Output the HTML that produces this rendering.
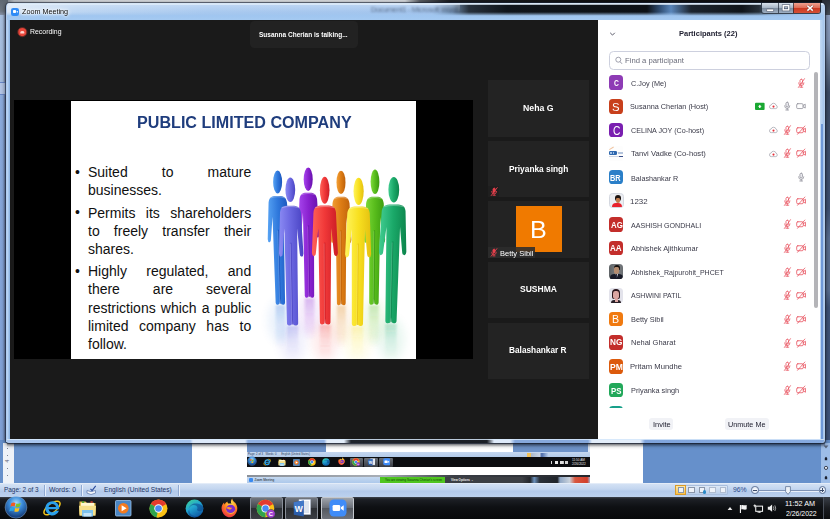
<!DOCTYPE html>
<html lang="en">
<head>
<meta charset="utf-8">
<title>Zoom Meeting</title>
<style>
*{box-sizing:border-box;margin:0;padding:0}
html,body{width:830px;height:519px;overflow:hidden;background:#658fcb;font-family:"Liberation Sans",sans-serif}
body{position:relative}
div,span,i,svg{position:absolute;display:block}
.t{white-space:pre;transform-origin:0 50%}
.ln{position:relative;display:block;white-space:nowrap;text-align:justify;text-align-last:justify;height:18.3px;transform-origin:0 50%}
.ln.last{text-align-last:left}
.av{border-radius:3.6px;overflow:hidden}
</style>
</head>
<body>
<div id="w" style="left:0;top:0;width:830px;height:519px;filter:blur(.4px)"><div style="left:0.00px;top:-8.00px;width:830.00px;height:14.00px;background:linear-gradient(90deg,#59626d 0,#7b838d 6px,#b9bec5 14px,#d4d7db 60px,#dcdfe3 200px,#d8dbdf 405px,#5a5e64 420px,#1b1d21 450px,#0e0f11 620px,#111316 100%)"></div><div style="left:-8.00px;top:-8.00px;width:16.00px;height:24.00px;background:linear-gradient(#5f6872,#5f6872 8px,#6f7884 80%,#8f9cb4)"></div><div style="left:-8.00px;top:15.00px;width:16.00px;height:469.00px;background:linear-gradient(#aac2e2 0,#a4bcde 66px,#8cacde 82px,#86a6da 200px,#7fa0d6 100%)"></div><div style="left:-8.00px;top:15.00px;width:16.00px;height:428.00px;background:linear-gradient(90deg,rgba(70,70,100,0) 0,rgba(70,70,100,0) 11px,rgba(70,70,100,.4) 13px,rgba(70,70,100,.55) 14.300px)"></div><div style="left:-1.00px;top:81.60px;width:6.60px;height:13.50px;border:1.200px solid #6a88c8;border-right-color:#9ab0d8;background:#b4c6e6"></div><div style="left:822.00px;top:-8.00px;width:16.00px;height:24.00px;background:linear-gradient(#2a2f38,#2a2f38 8px,#4a525e)"></div><div style="left:822.00px;top:15.00px;width:16.00px;height:430.00px;background:linear-gradient(#8c9fc2 0,#8496b6 6%,#5f6f88 12%,#3c4c66 18%,#3f5274 45%,#5a6f92 52%,#5a6f92 64%,#3f5478 68%,#40567e 100%)"></div><div style="left:-8.00px;top:440.00px;width:846.00px;height:44.00px;background:#6690cb"></div><div style="left:3.00px;top:443.00px;width:10.50px;height:41.00px;background:#eef2f8"></div><div style="left:7.00px;top:448.00px;width:1.00px;height:1.00px;background:#7a8494"></div><div style="left:7.00px;top:455.00px;width:1.00px;height:1.00px;background:#7a8494"></div><div style="left:7.00px;top:468.00px;width:1.00px;height:1.00px;background:#7a8494"></div><div style="left:7.00px;top:475.00px;width:1.00px;height:1.00px;background:#7a8494"></div><span style="left:5.5px;top:458px;font-size:5px;line-height:6px;color:#5a6474;transform:rotate(-90deg)">4</span><div style="left:191.60px;top:440.00px;width:451.20px;height:44.00px;background:#fff"></div><div style="left:821.00px;top:443.00px;width:17.00px;height:41.00px;background:#9dbde8"></div><svg style="left:822px;top:444px" width="8" height="40" viewBox="0 0 8 40"><path d="M1.6 1.5l2.4 3 2.4-3z" fill="#58657c"/><path d="M4 12.700l1.200 1.200v2.300h-2.400v-2.300zM4 31.800l-1.200 1.200v2.300h2.400v-2.300z" fill="#1a2030"/><circle cx="4" cy="23.900" r="1.600" fill="#e8eef8" stroke="#2a3040" stroke-width=".9"/></svg><div style="left:246.50px;top:443.00px;width:79.00px;height:9.00px;background:#6e93c9"></div><div style="left:512.80px;top:443.00px;width:77.20px;height:9.00px;background:#6e93c9"></div><div style="left:587.50px;top:443.00px;width:2.50px;height:14.00px;background:#dfe7f3"></div><div style="left:246.50px;top:451.80px;width:343.50px;height:5.50px;background:linear-gradient(#c5d7ef,#b3cae9)"></div><div style="left:246.50px;top:457.30px;width:343.50px;height:9.70px;background:#0c0d10"></div><span style="left:248px;top:452.3px;font-size:2.8px;line-height:4px;color:#2a3a5a;white-space:nowrap">Page: 2 of 3 &#160; Words: 0 &#160;&#160;&#160;&#160; English (United States)</span><div style="left:527.00px;top:452.60px;width:21.00px;height:4.00px;background:linear-gradient(90deg,#f2c25a 0,#f2c25a 18%,#aab8cc 20%,#c9d4e4 60%,#4a6aa8 70%,#b3cae9 100%)"></div><div style="left:349.90px;top:457.60px;width:13.60px;height:9.40px;background:linear-gradient(#6a6f78,#3a3d44);border-radius:1px"></div><div style="left:364.40px;top:457.60px;width:13.60px;height:9.40px;background:linear-gradient(#6a6f78,#3a3d44);border-radius:1px"></div><div style="left:379.00px;top:457.60px;width:13.60px;height:9.40px;background:linear-gradient(#6a6f78,#3a3d44);border-radius:1px"></div><svg style="left:246.88px;top:456.49px" width="10.03" height="10.03" viewBox="0 0 24 24"><circle cx="12" cy="12.300" r="10.900" fill="url(#orb)" stroke="#a8c8e8" stroke-width="0.700" stroke-opacity=".55"/><path d="M7.300 8.300q2-1.200 4.200-.3l-.9 3.500q-2.100-.9-4.200.3z" fill="#f25a22"/><path d="M12.400 8.400q2.100.9 4.300-.3l-.9 3.500q-2.200 1.100-4.300.3z" fill="#7cc32a"/><path d="M6.100 12.900q2.100-1.200 4.200-.3l-.9 3.500q-2.100-.9-4.200.3z" fill="#2aa4e8"/><path d="M11.200 13q2.100.9 4.300-.3l-.9 3.500q-2.200 1.100-4.300.3z" fill="#fbc21c"/></svg><svg style="left:262.56px;top:457.62px" width="8.36" height="8.36" viewBox="0 0 20 20"><ellipse cx="10" cy="10" rx="9.600" ry="4.400" transform="rotate(-38 10 10)" fill="none" stroke="#f2c41a" stroke-width="1.500"/><path d="M10.300 3.200a7.100 7.100 0 1 0 6.700 9.600h-3.600a3.900 3.900 0 0 1-6.900-1.500h10.800a7.100 7.100 0 0 0-7-8.100zm-3.800 5.700a3.900 3.900 0 0 1 7.500 0z" fill="#2aa0ec"/></svg><svg style="left:277.82px;top:457.62px" width="7.94" height="8.36" viewBox="0 0 19 20"><path d="M1.500 3.500h6l1.500 1.500h8.500v11.500h-16z" fill="#e2bf4e"/><rect x="3" y="4.800" width="13" height="4" fill="#fff7d0"/><rect x="4" y="3.300" width="2.200" height="1.500" fill="#3fa63a"/><rect x="12.500" y="3.300" width="2.200" height="1.500" fill="#d9422b"/><path d="M1 7.800h17l-.5 10h-16z" fill="#f6e08a"/><path d="M4 12h11v6.500h-11z" fill="#7fc3ee"/><path d="M5.500 15h8v3.500h-8z" fill="#c5e5f9"/></svg><svg style="left:293.07px;top:458.58px" width="7.11" height="7.11" viewBox="0 0 17 17"><rect x="0.500" y="0.500" width="15.500" height="15.500" rx="1" fill="#4a86c4" stroke="#9cc2ea" stroke-width=".8"/><circle cx="8.300" cy="8.300" r="5.300" fill="#f47a1e"/><path d="M6.600 5.300l5 3-5 3z" fill="#fff"/></svg><svg style="left:307.66px;top:457.83px" width="7.94" height="7.94" viewBox="0 0 19 19"><circle cx="9.500" cy="9.500" r="9" fill="#fbc116"/><path d="M9.500 9.500L1.700 5a9 9 0 0 1 15.600 0z" fill="#e33b2e"/><path d="M9.500 9.500L1.700 5a9 9 0 0 0 7.800 13.500z" fill="#2fa44f"/><path d="M9.500 9.500l3.900 2.250-3.900 6.750a9 9 0 0 1-2-.3z" fill="#fbc116"/><circle cx="9.500" cy="9.500" r="4.200" fill="#fff"/><circle cx="9.500" cy="9.500" r="3.300" fill="#4a8af4"/></svg><svg style="left:322.37px;top:457.83px" width="7.94" height="7.94" viewBox="0 0 19 19"><circle cx="9.500" cy="9.500" r="8.900" fill="url(#edg)"/><path d="M18.400 8.600c0 2.400-1.700 3.600-3.700 3.600-1.600 0-2.700-.7-2.700-1.600 0-.6.500-.8.500-1.700 0-1.700-1.700-3-3.800-3-2.600 0-4.400 1.800-4.900 4 .4-3 3-5.500 6.400-5.500 4.400 0 8 2 8.200 4.200z" fill="#0b3f86" opacity=".55"/><path d="M4.300 10.600c-.2 3.600 2.600 6.600 6.600 6.600 1.500 0 2.900-.4 4-1-1.500 1.500-3.400 2.200-5.400 2.200-3.600 0-6.300-2.500-6.300-5.600 0-.8.400-1.700 1.100-2.200z" fill="#0b3f86" opacity=".45"/></svg><svg style="left:337.59px;top:457.45px" width="7.94" height="8.36" viewBox="0 0 19 20"><path d="M9.500 19.300a9 9 0 0 1-8.700-11c.5-1.900 1.600-3.200 2.400-3.800-.1.800.1 1.500.4 1.900.6-1.700 2-2.500 3-3-.3.800 0 1.700.6 2.200 1-.3 2.300-.2 3.300.2-1.100-1.700-.6-3.700.7-5.200.2 2 1.600 3 3 4.200a9 9 0 0 1-4.700 14.500z" fill="url(#ffx)"/><circle cx="9.700" cy="11.300" r="4.500" fill="#7a2bd0"/><path d="M5.600 9.600c1-.9 2.200-.9 3-.3.700.6 1.700.5 2.400.1-.3 1.500-1.600 2.200-2.900 2-1.300-.1-2.300-.8-2.500-1.800z" fill="#ff9a2a"/><path d="M5.100 11.300a4.600 4.600 0 0 0 9.200.3 5.400 5.400 0 0 1-5.600 3.300c-1.900-.3-3.300-1.700-3.600-3.600z" fill="#ffb52a"/></svg><svg style="left:352.39px;top:457.87px" width="8.36" height="8.36" viewBox="0 0 20 20"><circle cx="9.500" cy="9.500" r="8.800" fill="#fbc116"/><path d="M9.500 9.500L1.900 5.100a8.800 8.800 0 0 1 15.200 0z" fill="#e33b2e"/><path d="M9.500 9.500L1.900 5.100a8.800 8.800 0 0 0 7.600 13.200z" fill="#2fa44f"/><circle cx="9.500" cy="9.500" r="4.100" fill="#fff"/><circle cx="9.500" cy="9.500" r="3.200" fill="#4a8af4"/><circle cx="14.900" cy="14.700" r="4.300" fill="#a03fd0" stroke="#33363c" stroke-width=".5"/><text x="14.900" y="16.800" font-family="Liberation Sans,sans-serif" font-size="5.800" font-weight="bold" fill="#fff" text-anchor="middle">C</text></svg><svg style="left:367.52px;top:457.62px" width="7.94" height="8.36" viewBox="0 0 19 20"><path d="M6 1.500h11.500v15h-11.500z" fill="#fff" stroke="#b8c4d8" stroke-width=".6"/><path d="M9 4h7M9 6h7M9 8h7M9 10h7M9 12h7M9 14h7" stroke="#9fb2d0" stroke-width=".7"/><path d="M.8 4.200l10-1.700v16l-10-1.700z" fill="#2a5caa"/><path d="M.8 4.200l10-1.700v8.200h-10z" fill="#4178c8"/><text x="5.800" y="14" font-family="Liberation Sans,sans-serif" font-size="8.500" font-weight="bold" fill="#fff" text-anchor="middle">W</text></svg><svg style="left:382.65px;top:458.04px" width="7.52" height="7.52" viewBox="0 0 18 18"><rect x=".5" y=".5" width="17" height="17" rx="4.200" fill="#3f8cf8"/><rect x="3.600" y="5.900" width="7.600" height="6.200" rx="1.400" fill="#fff"/><path d="M11.900 8.200l2.800-1.900v5.400l-2.800-1.900z" fill="#fff"/></svg><span style="left:572px;top:458px;font-size:3.1px;line-height:4px;color:#e8e8e8;white-space:nowrap">11:50 AM</span><span style="left:572px;top:462px;font-size:3.1px;line-height:4px;color:#e8e8e8;white-space:nowrap">2/26/2022</span><div style="left:549.00px;top:460.50px;width:19.00px;height:3.50px;background:linear-gradient(90deg,#0c0d10 0,#0c0d10 8%,#d8d8d8 10%,#d8d8d8 14%,#0c0d10 16%,#0c0d10 30%,#e8e8e8 32%,#e8e8e8 48%,#0c0d10 50%,#0c0d10 58%,#e0e0e0 60%,#e0e0e0 76%,#0c0d10 78%,#0c0d10 84%,#d0d0d0 86%,#d0d0d0 98%,#0c0d10 100%)"></div><div style="left:246.50px;top:475.30px;width:343.50px;height:1.30px;background:linear-gradient(90deg,#8a9098 0,#a8aeb6 40%,#3a3e46 60%,#24272c 100%)"></div><div style="left:246.50px;top:476.60px;width:133.90px;height:7.00px;background:linear-gradient(#c4d8f0,#a9c6ea)"></div><div style="left:248.50px;top:478.00px;width:4.00px;height:4.00px;background:#3a8af0;border-radius:1px"></div><span style="left:254.5px;top:477.8px;font-size:3.1px;line-height:4px;color:#1a1a1a;white-space:nowrap">Zoom Meeting</span><div style="left:380.40px;top:476.60px;width:64.40px;height:7.00px;background:#4fc51f"></div><span style="left:385px;top:478px;font-size:3px;line-height:4px;color:#0c3a08;white-space:nowrap">You are viewing Susanna Cherian&#39;s screen</span><div style="left:444.80px;top:476.60px;width:77.20px;height:7.00px;background:#3c3f44"></div><span style="left:451px;top:478px;font-size:3px;line-height:4px;color:#f0f0f0;font-weight:bold;white-space:nowrap">View Options ⌄</span><div style="left:522.00px;top:476.60px;width:68.00px;height:7.00px;background:linear-gradient(90deg,#3c3f44 0,#23262b 12%,#6a90bc 18%,#2a3038 26%,#20242a 52%,#8fa6c4 56%,#c9d2dc 70%,#d8573f 78%,#d23f2c 96%,#9fb6d6 100%)"></div><div style="left:-8.00px;top:483.40px;width:846.00px;height:13.20px;background:linear-gradient(#d3e1f4 0,#c2d5ef 40%,#b2c9ea 55%,#bcd1ee 100%);border-top:1px solid #e3ecf8"></div><span class="t" style="left:4.32px;top:485.15px;font-size:7.3px;line-height:9.5px;color:#1e3566;transform:scaleX(0.8785);">Page: 2 of 3</span><span class="t" style="left:49.04px;top:485.15px;font-size:7.3px;line-height:9.5px;color:#1e3566;transform:scaleX(0.9321);">Words: 0</span><span class="t" style="left:104.32px;top:485.15px;font-size:7.3px;line-height:9.5px;color:#1e3566;transform:scaleX(0.9080);">English (United States)</span><div style="left:44.40px;top:484.60px;width:1.00px;height:11.40px;background:#8fa9d2;box-shadow:1px 0 0 #e8f0fb"></div><div style="left:80.60px;top:484.60px;width:1.00px;height:11.40px;background:#8fa9d2;box-shadow:1px 0 0 #e8f0fb"></div><div style="left:177.60px;top:484.60px;width:1.00px;height:11.40px;background:#8fa9d2;box-shadow:1px 0 0 #e8f0fb"></div><svg style="left:86px;top:485px" width="11" height="10" viewBox="0 0 11 10"><path d="M1 5.500l4 1.200 4.500-1.200v2.600l-4.500 1.400-4-1.400z" fill="#f4f6fa" stroke="#5a74a8" stroke-width=".7"/><path d="M4.500 3.800l1.600 1.800 3.600-4.800" fill="none" stroke="#2a4a9a" stroke-width="1.100"/></svg><div style="left:675.00px;top:485.00px;width:53.00px;height:10.30px;background:linear-gradient(#dde8f6,#b9cde9);border:1px solid #a9bedd;border-radius:1px"></div><div style="left:675.30px;top:485.00px;width:11.00px;height:10.30px;background:linear-gradient(#fde9a8,#f7c04a);border:1px solid #d89a2a"></div><div style="left:677.60px;top:487.20px;width:6.40px;height:6.00px;background:#eef2f8;border:1px solid #8a96aa"></div><div style="left:688.20px;top:487.20px;width:6.40px;height:6.00px;background:#eef2f8;border:1px solid #8a96aa"></div><div style="left:698.60px;top:487.20px;width:6.40px;height:6.00px;background:#eef2f8;border:1px solid #8a96aa"></div><div style="left:709.20px;top:487.20px;width:6.40px;height:6.00px;background:#eef2f8;border:1px solid #b0bccf"></div><div style="left:719.60px;top:487.20px;width:6.40px;height:6.00px;background:#eef2f8;border:1px solid #b0bccf"></div><div style="left:702.60px;top:490.40px;width:3.40px;height:3.40px;background:#2a8ac8;border-radius:50%"></div><span class="t" style="left:732.57px;top:485.15px;font-size:7.3px;line-height:9.5px;color:#2a4a8a;transform:scaleX(0.9289);">96%</span><div style="left:758.50px;top:489.60px;width:60.00px;height:1.00px;background:#7f93b6;box-shadow:0 1px 0 #e9f0fa"></div><div style="left:751.20px;top:486.30px;width:7.40px;height:7.40px;border-radius:50%;background:radial-gradient(#fff,#d0dcee);border:1px solid #5f7396"></div><div style="left:752.90px;top:489.60px;width:4.00px;height:0.90px;background:#3a4a6a"></div><div style="left:818.60px;top:486.30px;width:7.40px;height:7.40px;border-radius:50%;background:radial-gradient(#fff,#d0dcee);border:1px solid #5f7396"></div><div style="left:820.30px;top:489.60px;width:4.00px;height:0.90px;background:#3a4a6a"></div><div style="left:821.85px;top:488.00px;width:0.90px;height:4.00px;background:#3a4a6a"></div><svg style="left:784.500px;top:485.500px" width="6" height="9" viewBox="0 0 6 9"><path d="M.6.600h4.800v5l-2.400 2.800-2.400-2.800z" fill="#eef2f8" stroke="#5f7396" stroke-width=".8"/></svg><div style="left:-8.00px;top:496.60px;width:846.00px;height:31.40px;background:linear-gradient(#3d434d 0,#1d2026 2px,#0e1013 10px,#08090b 22px,#08090b 100%)"></div><div style="left:249.50px;top:497.20px;width:33.30px;height:22.80px;background:linear-gradient(#70757e 0,#44484f 45%,#2b2e33 50%,#3b3e45 100%);border:1px solid #888e98;border-radius:2px"></div><div style="left:285.20px;top:497.20px;width:33.00px;height:22.80px;background:linear-gradient(#70757e 0,#44484f 45%,#2b2e33 50%,#3b3e45 100%);border:1px solid #888e98;border-radius:2px"></div><div style="left:320.60px;top:497.20px;width:33.70px;height:22.80px;background:linear-gradient(#9ea3ab 0,#6d727b 45%,#54585f 50%,#6f737b 100%);border:1px solid #c4c8ce;border-radius:2px"></div>
<svg style="left:4px;top:495.300px" width="24" height="24" viewBox="0 0 24 24"><defs><radialGradient id="orb" cx="0.5" cy="0.3" r="0.75"><stop offset="0" stop-color="#a8dcff"/><stop offset="0.4" stop-color="#3a8ad8"/><stop offset="1" stop-color="#0c2a62"/></radialGradient></defs><circle cx="12" cy="12.300" r="10.900" fill="url(#orb)" stroke="#a8c8e8" stroke-width="0.700" stroke-opacity=".55"/><path d="M7.300 8.300q2-1.200 4.200-.3l-.9 3.500q-2.100-.9-4.200.3z" fill="#f25a22"/><path d="M12.400 8.400q2.100.9 4.300-.3l-.9 3.500q-2.200 1.100-4.300.3z" fill="#7cc32a"/><path d="M6.100 12.900q2.100-1.200 4.200-.3l-.9 3.500q-2.100-.9-4.200.3z" fill="#2aa4e8"/><path d="M11.200 13q2.100.9 4.300-.3l-.9 3.500q-2.200 1.100-4.300.3z" fill="#fbc21c"/></svg>
<svg style="left:41.500px;top:498px" width="20" height="20" viewBox="0 0 20 20"><ellipse cx="10" cy="10" rx="9.600" ry="4.400" transform="rotate(-38 10 10)" fill="none" stroke="#f2c41a" stroke-width="1.500"/><path d="M10.300 3.200a7.100 7.100 0 1 0 6.700 9.600h-3.600a3.900 3.900 0 0 1-6.900-1.500h10.800a7.100 7.100 0 0 0-7-8.100zm-3.800 5.700a3.900 3.900 0 0 1 7.500 0z" fill="#2aa0ec"/></svg>
<svg style="left:78px;top:498px" width="19" height="20" viewBox="0 0 19 20"><path d="M1.500 3.500h6l1.500 1.500h8.500v11.500h-16z" fill="#e2bf4e"/><rect x="3" y="4.800" width="13" height="4" fill="#fff7d0"/><rect x="4" y="3.300" width="2.200" height="1.500" fill="#3fa63a"/><rect x="12.500" y="3.300" width="2.200" height="1.500" fill="#d9422b"/><path d="M1 7.800h17l-.5 10h-16z" fill="#f6e08a"/><path d="M4 12h11v6.500h-11z" fill="#7fc3ee"/><path d="M5.500 15h8v3.500h-8z" fill="#c5e5f9"/></svg>
<svg style="left:114.500px;top:500.300px" width="17" height="17" viewBox="0 0 17 17"><rect x="0.500" y="0.500" width="15.500" height="15.500" rx="1" fill="#4a86c4" stroke="#9cc2ea" stroke-width=".8"/><circle cx="8.300" cy="8.300" r="5.300" fill="#f47a1e"/><path d="M6.600 5.300l5 3-5 3z" fill="#fff"/></svg>
<svg style="left:149.400px;top:498.500px" width="19" height="19" viewBox="0 0 19 19"><circle cx="9.500" cy="9.500" r="9" fill="#fbc116"/><path d="M9.500 9.500L1.700 5a9 9 0 0 1 15.600 0z" fill="#e33b2e"/><path d="M9.500 9.500L1.700 5a9 9 0 0 0 7.800 13.500z" fill="#2fa44f"/><path d="M9.500 9.500l3.900 2.250-3.900 6.750a9 9 0 0 1-2-.3z" fill="#fbc116"/><circle cx="9.500" cy="9.500" r="4.200" fill="#fff"/><circle cx="9.500" cy="9.500" r="3.300" fill="#4a8af4"/></svg>
<svg style="left:184.600px;top:498.500px" width="19" height="19" viewBox="0 0 19 19"><defs><linearGradient id="edg" x1="0.2" y1="0" x2="0.8" y2="1"><stop offset="0" stop-color="#3ccf9c"/><stop offset=".4" stop-color="#22a6d2"/><stop offset="1" stop-color="#0c4f9e"/></linearGradient></defs><circle cx="9.500" cy="9.500" r="8.900" fill="url(#edg)"/><path d="M18.400 8.600c0 2.400-1.700 3.600-3.700 3.600-1.600 0-2.700-.7-2.700-1.600 0-.6.500-.8.500-1.700 0-1.700-1.700-3-3.800-3-2.600 0-4.400 1.800-4.900 4 .4-3 3-5.500 6.400-5.500 4.400 0 8 2 8.200 4.200z" fill="#0b3f86" opacity=".55"/><path d="M4.300 10.600c-.2 3.600 2.600 6.600 6.600 6.600 1.500 0 2.900-.4 4-1-1.500 1.500-3.400 2.200-5.400 2.200-3.600 0-6.300-2.500-6.300-5.600 0-.8.400-1.700 1.100-2.200z" fill="#0b3f86" opacity=".45"/></svg>
<svg style="left:221px;top:497.600px" width="19" height="20" viewBox="0 0 19 20"><defs><radialGradient id="ffx" cx=".6" cy=".25" r=".85"><stop offset="0" stop-color="#ffe14a"/><stop offset=".45" stop-color="#ff8a1e"/><stop offset="1" stop-color="#e8224a"/></radialGradient></defs><path d="M9.500 19.300a9 9 0 0 1-8.700-11c.5-1.900 1.600-3.200 2.400-3.800-.1.800.1 1.500.4 1.900.6-1.700 2-2.500 3-3-.3.800 0 1.700.6 2.200 1-.3 2.300-.2 3.300.2-1.100-1.700-.6-3.700.7-5.200.2 2 1.600 3 3 4.200a9 9 0 0 1-4.700 14.500z" fill="url(#ffx)"/><circle cx="9.700" cy="11.300" r="4.500" fill="#7a2bd0"/><path d="M5.600 9.600c1-.9 2.200-.9 3-.3.700.6 1.700.5 2.400.1-.3 1.500-1.600 2.200-2.900 2-1.300-.1-2.300-.8-2.500-1.800z" fill="#ff9a2a"/><path d="M5.100 11.300a4.600 4.600 0 0 0 9.200.3 5.400 5.400 0 0 1-5.600 3.300c-1.900-.3-3.300-1.700-3.600-3.600z" fill="#ffb52a"/></svg>
<svg style="left:256.400px;top:498.600px" width="20" height="20" viewBox="0 0 20 20"><circle cx="9.500" cy="9.500" r="8.800" fill="#fbc116"/><path d="M9.500 9.500L1.900 5.100a8.800 8.800 0 0 1 15.200 0z" fill="#e33b2e"/><path d="M9.500 9.500L1.900 5.100a8.800 8.800 0 0 0 7.600 13.200z" fill="#2fa44f"/><circle cx="9.500" cy="9.500" r="4.100" fill="#fff"/><circle cx="9.500" cy="9.500" r="3.200" fill="#4a8af4"/><circle cx="14.900" cy="14.700" r="4.300" fill="#a03fd0" stroke="#33363c" stroke-width=".5"/><text x="14.900" y="16.800" font-family="Liberation Sans,sans-serif" font-size="5.800" font-weight="bold" fill="#fff" text-anchor="middle">C</text></svg>
<svg style="left:292.600px;top:498px" width="19" height="20" viewBox="0 0 19 20"><path d="M6 1.500h11.500v15h-11.500z" fill="#fff" stroke="#b8c4d8" stroke-width=".6"/><path d="M9 4h7M9 6h7M9 8h7M9 10h7M9 12h7M9 14h7" stroke="#9fb2d0" stroke-width=".7"/><path d="M.8 4.200l10-1.700v16l-10-1.700z" fill="#2a5caa"/><path d="M.8 4.200l10-1.700v8.200h-10z" fill="#4178c8"/><text x="5.800" y="14" font-family="Liberation Sans,sans-serif" font-size="8.500" font-weight="bold" fill="#fff" text-anchor="middle">W</text></svg>
<svg style="left:328.800px;top:499px" width="18" height="18" viewBox="0 0 18 18"><rect x=".5" y=".5" width="17" height="17" rx="4.200" fill="#3f8cf8"/><rect x="3.600" y="5.900" width="7.600" height="6.200" rx="1.400" fill="#fff"/><path d="M11.900 8.200l2.800-1.900v5.400l-2.800-1.900z" fill="#fff"/></svg>
<svg style="left:727.200px;top:506px" width="6" height="5" viewBox="0 0 6 5"><path d="M.6 4l2.400-3 2.400 3z" fill="#e8e8e8"/></svg>
<svg style="left:739.400px;top:503.600px" width="9.600" height="9.600" viewBox="0 0 12 12"><path d="M1.800 1.200v10" stroke="#f4f4f4" stroke-width="1.400"/><path d="M2.800 1.600c2.200-1.100 3.800.9 6.800-.3v5.400c-3 1.200-4.600-.8-6.800.3z" fill="#f4f4f4"/></svg>
<svg style="left:753px;top:503.600px" width="10.500" height="9.800" viewBox="0 0 13 12"><rect x="3.400" y="2.600" width="8.400" height="6.400" fill="none" stroke="#f0f0f0" stroke-width="1.300"/><path d="M2.200 0.400v3.600M.6 2h3.200M5.500 11h4.400M7.700 9v2" stroke="#f0f0f0" stroke-width="1.100"/></svg>
<svg style="left:767px;top:503.200px" width="10.400" height="10.400" viewBox="0 0 13 13"><path d="M1 4.700h2.200l3.200-2.700v9l-3.200-2.700h-2.200z" fill="#f0f0f0"/><path d="M8 4.300q1.300 2.200 0 4.400M9.800 3q2.200 3.500 0 7" fill="none" stroke="#d8d8d8" stroke-width=".9"/></svg>
<span class="t" style="left:785.41px;top:499.15px;font-size:7.6px;line-height:9.9px;color:#fff;transform:scaleX(0.9543);">11:52 AM</span><span class="t" style="left:785.62px;top:509.15px;font-size:7.6px;line-height:9.9px;color:#fff;transform:scaleX(0.9087);">2/26/2022</span><div style="left:822.70px;top:497.00px;width:15.30px;height:31.00px;background:linear-gradient(#3a3f48,#1a1c20 11px,#0c0d0f 22px,#0c0d0f);border-left:1px solid #4a505a"></div><div style="left:6.30px;top:3.00px;width:818.30px;height:440.00px;border-radius:4px 4px 3px 3px;background:#b4cdec;box-shadow:0 0 0 1px rgba(30,40,60,.6),0 1px 4px 1px rgba(0,0,0,.5)"></div><div style="left:7.30px;top:4.00px;width:816.30px;height:16.50px;border-radius:3px 3px 0 0;background:linear-gradient(90deg,#dde8f5 0,#cfe0f4 25px,#bcd5f2 70px,#a9c9ef 200px,#a5c6ee 330px,#a3c4ec 425px,#6f8cad 445px,#27303b 462px,#10151b 500px,#0d1116 640px,#2d4a6e 652px,#5a86ba 664px,#1c242e 684px,#10141a 735px,#27303a 752px,#5f7790 762px,#9ab9dc 790px,#b4cfee 100%)"></div><div style="left:7.30px;top:4.00px;width:452.70px;height:8.00px;border-radius:3px 0 0 0;background:linear-gradient(rgba(255,255,255,.28),rgba(255,255,255,0))"></div><div style="left:7.30px;top:3.40px;width:816.30px;height:1.20px;border-radius:3px 3px 0 0;background:rgba(225,238,250,.75)"></div><div style="left:7.30px;top:11.50px;width:816.30px;height:9.00px;background:linear-gradient(rgba(160,197,238,0) 0,rgba(160,197,238,.55) 25%,rgba(160,198,240,1) 42%,rgba(166,202,241,1) 100%)"></div><div style="left:366px;top:4.600px;width:92px;height:9px;overflow:hidden"><span style="left:5px;top:0;font-size:7.300px;line-height:9px;color:#2c3a52;opacity:.62;filter:blur(.8px);white-space:nowrap;letter-spacing:-.25px">Document1 - Microsoft Word</span></div><div style="left:6.30px;top:20.00px;width:4.20px;height:422.00px;background:linear-gradient(90deg,#a9c8f0,#b9d4f4 35%,#86aedf)"></div><div style="left:820.00px;top:20.00px;width:4.40px;height:422.00px;background:linear-gradient(90deg,#c4dbf5,#a5c4ea)"></div><div style="left:820.60px;top:124.00px;width:2.20px;height:314.50px;background:#7099d8"></div><div style="left:7.30px;top:438.80px;width:816.30px;height:4.20px;border-radius:0 0 3px 3px;background:linear-gradient(90deg,#a9c6ee 0,#a4c2ec 183px,#dde9f9 186px,#dde9f9 238px,#8fb0e2 241px,#8fb0e2 317px,#e4eefa 320px,#e4eefa 337px,#1e232b 344px,#1a1e25 480px,#dfeaf9 487px,#dfeaf9 503px,#86a8dc 508px,#86a8dc 581px,#e4eefa 585px,#e4eefa 633px,#7fa4dc 638px,#86aae0 100%)"></div><div style="left:7.30px;top:438.60px;width:816.30px;height:1.20px;background:rgba(214,232,250,.85)"></div><div style="left:7.00px;top:443.00px;width:818.00px;height:4.00px;background:linear-gradient(rgba(10,15,30,.5),rgba(10,15,30,.18) 50%,rgba(10,15,30,0))"></div><div style="left:11.10px;top:7.70px;width:8.00px;height:8.20px;border-radius:2.2px;background:#2f8bf6"><i style="left:1.700px;top:2.700px;width:3.400px;height:2.800px;border-radius:.7px;background:#fff"></i><i style="left:5.400px;top:3.100px;width:1.400px;height:2px;background:#fff;clip-path:polygon(0 35%,100% 0,100% 100%,0 65%)"></i></div><span class="t" style="left:22.37px;top:7.20px;font-size:7.5px;line-height:9.8px;color:#0a0a0a;transform:scaleX(0.9616);text-shadow:0 0 2px #fff,0 0 4px #fff,0 0 5px #fff;">Zoom Meeting</span><div style="left:761.40px;top:3.20px;width:59.40px;height:11.20px;border-radius:0 0 3px 3px;border:1px solid rgba(30,40,55,.85);border-top:0;background:linear-gradient(#d9e2ec 0,#aab8c8 45%,#7b8a9c 50%,#9fb0c4 100%);overflow:hidden"><i style="left:31px;top:0;width:28.400px;height:11.200px;background:linear-gradient(#f0a08e 0,#de6a54 45%,#cc3a22 50%,#d8553a 100%)"></i><i style="left:15.600px;top:0;width:1px;height:11.200px;background:rgba(30,40,55,.7)"></i><i style="left:30.300px;top:0;width:1px;height:11.200px;background:rgba(30,40,55,.7)"></i><svg style="left:0;top:0" width="59.400" height="11.200" viewBox="761.400 3.200 59.400 11.200"><rect x="766" y="9.300" width="7" height="2.500" rx=".5" fill="#fff" stroke="#485268" stroke-width=".6"/><rect x="782.600" y="5.900" width="5.600" height="4.200" fill="none" stroke="#485268" stroke-width="2.600"/><rect x="782.600" y="5.900" width="5.600" height="4.200" fill="none" stroke="#fff" stroke-width="1.500"/><path d="M806.800 5.800l5.400 5M812.200 5.800l-5.400 5" stroke="#7a2a20" stroke-width="2.500"/><path d="M806.800 5.800l5.400 5M812.200 5.800l-5.400 5" stroke="#fff" stroke-width="1.500"/></svg></div><div style="left:10.40px;top:20.20px;width:587.80px;height:418.60px;background:#1a1a1a"></div><svg style="left:17px;top:27px" width="11" height="11" viewBox="0 0 11 11"><circle cx="5.300" cy="5.100" r="4.100" fill="#e8463a"/><circle cx="5.300" cy="5.100" r="4.600" fill="none" stroke="#e8463a" stroke-opacity=".35" stroke-width="1"/><path d="M3.300 6.600v-1.200a2 1.300 0 0 1 4 0v1.200z" fill="#ffd6cf"/></svg><span class="t" style="left:29.56px;top:27.30px;font-size:7.4px;line-height:9.6px;color:#fff;transform:scaleX(0.9367);">Recording</span><div style="left:249.70px;top:21.00px;width:108.50px;height:26.90px;border-radius:4.500px;background:#222"></div><span class="t" style="left:259.03px;top:30.00px;font-size:7.5px;line-height:9.8px;color:#fff;font-weight:bold;transform:scaleX(0.8682);">Susanna Cherian is talking...</span><div style="left:13.80px;top:99.90px;width:459.20px;height:258.90px;background:#000"></div><div style="left:71.40px;top:100.60px;width:344.30px;height:258.20px;background:#fff;overflow:hidden"><svg style="left:183.6px;top:34.4px" width="161" height="223.700" viewBox="255 135 161 223.700"><defs><filter id="bl" x="-80%" y="-80%" width="260%" height="260%"><feGaussianBlur stdDeviation="4"/></filter><filter id="b1" x="-40%" y="-10%" width="180%" height="120%"><feGaussianBlur stdDeviation="0.900"/></filter><linearGradient id="g0" x1="0" y1="0" x2="1" y2="0"><stop offset="0" stop-color="#58a4f4"/><stop offset="0.5" stop-color="#2f78dc"/><stop offset="1" stop-color="#1a54bc"/></linearGradient><linearGradient id="r0" x1="0" y1="0" x2="0" y2="1"><stop offset="0" stop-color="#2f78dc" stop-opacity=".26"/><stop offset=".45" stop-color="#2f78dc" stop-opacity=".1"/><stop offset="1" stop-color="#2f78dc" stop-opacity="0"/></linearGradient><linearGradient id="g1" x1="0" y1="0" x2="1" y2="0"><stop offset="0" stop-color="#a848ee"/><stop offset="0.5" stop-color="#8a22d0"/><stop offset="1" stop-color="#6610ac"/></linearGradient><linearGradient id="r1" x1="0" y1="0" x2="0" y2="1"><stop offset="0" stop-color="#8a22d0" stop-opacity=".26"/><stop offset=".45" stop-color="#8a22d0" stop-opacity=".1"/><stop offset="1" stop-color="#8a22d0" stop-opacity="0"/></linearGradient><linearGradient id="g2" x1="0" y1="0" x2="1" y2="0"><stop offset="0" stop-color="#f4a238"/><stop offset="0.5" stop-color="#dd7c14"/><stop offset="1" stop-color="#bc600a"/></linearGradient><linearGradient id="r2" x1="0" y1="0" x2="0" y2="1"><stop offset="0" stop-color="#dd7c14" stop-opacity=".26"/><stop offset=".45" stop-color="#dd7c14" stop-opacity=".1"/><stop offset="1" stop-color="#dd7c14" stop-opacity="0"/></linearGradient><linearGradient id="g3" x1="0" y1="0" x2="1" y2="0"><stop offset="0" stop-color="#80dc3c"/><stop offset="0.5" stop-color="#58bc1c"/><stop offset="1" stop-color="#38980e"/></linearGradient><linearGradient id="r3" x1="0" y1="0" x2="0" y2="1"><stop offset="0" stop-color="#58bc1c" stop-opacity=".26"/><stop offset=".45" stop-color="#58bc1c" stop-opacity=".1"/><stop offset="1" stop-color="#58bc1c" stop-opacity="0"/></linearGradient><linearGradient id="g4" x1="0" y1="0" x2="1" y2="0"><stop offset="0" stop-color="#8c8cf4"/><stop offset="0.5" stop-color="#6a66e0"/><stop offset="1" stop-color="#4a44c4"/></linearGradient><linearGradient id="r4" x1="0" y1="0" x2="0" y2="1"><stop offset="0" stop-color="#6a66e0" stop-opacity=".26"/><stop offset=".45" stop-color="#6a66e0" stop-opacity=".1"/><stop offset="1" stop-color="#6a66e0" stop-opacity="0"/></linearGradient><linearGradient id="g5" x1="0" y1="0" x2="1" y2="0"><stop offset="0" stop-color="#ff6258"/><stop offset="0.5" stop-color="#f03838"/><stop offset="1" stop-color="#cc1c26"/></linearGradient><linearGradient id="r5" x1="0" y1="0" x2="0" y2="1"><stop offset="0" stop-color="#f03838" stop-opacity=".26"/><stop offset=".45" stop-color="#f03838" stop-opacity=".1"/><stop offset="1" stop-color="#f03838" stop-opacity="0"/></linearGradient><linearGradient id="g6" x1="0" y1="0" x2="1" y2="0"><stop offset="0" stop-color="#fff45c"/><stop offset="0.5" stop-color="#f8e020"/><stop offset="1" stop-color="#e4c010"/></linearGradient><linearGradient id="r6" x1="0" y1="0" x2="0" y2="1"><stop offset="0" stop-color="#f8e020" stop-opacity=".26"/><stop offset=".45" stop-color="#f8e020" stop-opacity=".1"/><stop offset="1" stop-color="#f8e020" stop-opacity="0"/></linearGradient><linearGradient id="g7" x1="0" y1="0" x2="1" y2="0"><stop offset="0" stop-color="#40cc90"/><stop offset="0.5" stop-color="#1aa868"/><stop offset="1" stop-color="#0c844c"/></linearGradient><linearGradient id="r7" x1="0" y1="0" x2="0" y2="1"><stop offset="0" stop-color="#1aa868" stop-opacity=".26"/><stop offset=".45" stop-color="#1aa868" stop-opacity=".1"/><stop offset="1" stop-color="#1aa868" stop-opacity="0"/></linearGradient></defs><rect x="275.7" y="305.2" width="9.4" height="42.0" fill="url(#r0)" filter="url(#b1)"/><ellipse cx="280.4" cy="320.7" rx="12.7" ry="22" fill="#2f78dc" opacity="0.09" filter="url(#bl)"/><rect x="304.8" y="298.3" width="9.4" height="42.0" fill="url(#r1)" filter="url(#b1)"/><ellipse cx="309.5" cy="313.8" rx="12.7" ry="22" fill="#8a22d0" opacity="0.09" filter="url(#bl)"/><rect x="336.9" y="305.7" width="8.8" height="42.0" fill="url(#r2)" filter="url(#b1)"/><ellipse cx="341.3" cy="321.2" rx="12.4" ry="22" fill="#dd7c14" opacity="0.09" filter="url(#bl)"/><rect x="369.2" y="305.2" width="9.4" height="42.0" fill="url(#r3)" filter="url(#b1)"/><ellipse cx="373.9" cy="320.7" rx="12.7" ry="22" fill="#58bc1c" opacity="0.09" filter="url(#bl)"/><rect x="287.0" y="326.0" width="11.2" height="31.5" fill="url(#r4)" filter="url(#b1)"/><ellipse cx="292.6" cy="341.5" rx="13.6" ry="22" fill="#6a66e0" opacity="0.09" filter="url(#bl)"/><rect x="319.9" y="324.9" width="10.6" height="32.6" fill="url(#r5)" filter="url(#b1)"/><ellipse cx="325.2" cy="340.4" rx="13.3" ry="22" fill="#f03838" opacity="0.09" filter="url(#bl)"/><rect x="351.8" y="326.5" width="11.2" height="31.0" fill="url(#r6)" filter="url(#b1)"/><ellipse cx="357.4" cy="342.0" rx="13.6" ry="22" fill="#f8e020" opacity="0.09" filter="url(#bl)"/><rect x="385.3" y="323.7" width="11.2" height="33.8" fill="url(#r7)" filter="url(#b1)"/><ellipse cx="390.9" cy="339.2" rx="13.6" ry="22" fill="#1aa868" opacity="0.09" filter="url(#bl)"/><g transform="translate(277.6 196.0) skewX(1.48) translate(-277.6 -196.0)"><path d="M275.6,196.0C271.8,196.0 269.2,197.2 268.4,202.5L266.6,239.2Q267.0,243.0 268.4,242.2Q269.8,241.7 269.8,239.2L272.0,216.7L272.9,302.7Q273.2,305.1 274.9,304.7Q277.2,304.7 277.2,302.2L277.6,298.7L278.0,302.2Q278.0,304.7 280.3,304.7Q282.0,305.1 282.3,302.7L283.2,216.7L285.4,239.2Q285.4,241.7 286.8,242.2Q288.2,243.0 288.6,239.2L286.8,202.5C286.0,197.2 283.4,196.0 279.6,196.0Z" fill="url(#g0)"/><path d="M270.1,198.0Q277.6,195.4 285.1,198.0" fill="none" stroke="#fff" stroke-opacity=".28" stroke-width="1.2"/><path d="M277.6,229.7V303.7" stroke="#1a54bc" stroke-opacity=".9" stroke-width="1"/><path d="M276.9,230.7V303.7" stroke="#fff" stroke-opacity=".3" stroke-width=".6"/></g><ellipse cx="277.6" cy="182.0" rx="4.5" ry="11.4" fill="url(#g0)"/><g transform="translate(308.2 192.8) skewX(0.71) translate(-308.2 -192.8)"><path d="M306.2,192.8C302.8,192.8 300.2,194.0 299.4,199.3L297.6,234.4Q298.0,238.2 299.3,237.4Q300.7,236.9 300.7,234.4L302.7,212.8L303.5,295.8Q303.8,298.2 305.5,297.8Q307.8,297.8 307.8,295.3L308.2,291.8L308.6,295.3Q308.6,297.8 310.9,297.8Q312.6,298.2 312.9,295.8L313.7,212.8L315.7,234.4Q315.7,236.9 317.1,237.4Q318.4,238.2 318.8,234.4L317.0,199.3C316.2,194.0 313.6,192.8 310.2,192.8Z" fill="url(#g1)"/><path d="M301.1,194.8Q308.2,192.2 315.3,194.8" fill="none" stroke="#fff" stroke-opacity=".28" stroke-width="1.2"/><path d="M308.2,225.4V296.8" stroke="#6610ac" stroke-opacity=".9" stroke-width="1"/><path d="M307.5,226.4V296.8" stroke="#fff" stroke-opacity=".3" stroke-width=".6"/></g><ellipse cx="308.2" cy="179.2" rx="4.5" ry="11.7" fill="url(#g1)"/><g transform="translate(341.0 196.7) skewX(0.16) translate(-341.0 -196.7)"><path d="M339.0,196.7C335.9,196.7 333.3,197.9 332.5,203.2L330.7,239.8Q331.1,243.6 332.3,242.8Q333.7,242.3 333.7,239.8L335.6,217.3L336.6,303.2Q336.9,305.6 338.5,305.2Q340.6,305.2 340.6,302.7L341.0,299.2L341.4,302.7Q341.4,305.2 343.5,305.2Q345.1,305.6 345.4,303.2L346.4,217.3L348.3,239.8Q348.3,242.3 349.7,242.8Q350.9,243.6 351.3,239.8L349.5,203.2C348.7,197.9 346.1,196.7 343.0,196.7Z" fill="url(#g2)"/><path d="M334.2,198.7Q341.0,196.1 347.8,198.7" fill="none" stroke="#fff" stroke-opacity=".28" stroke-width="1.2"/><path d="M341.0,230.3V304.2" stroke="#bc600a" stroke-opacity=".9" stroke-width="1"/><path d="M340.3,231.3V304.2" stroke="#fff" stroke-opacity=".3" stroke-width=".6"/></g><ellipse cx="341.0" cy="182.4" rx="4.5" ry="11.7" fill="url(#g2)"/><g transform="translate(375.0 196.8) skewX(-0.58) translate(-375.0 -196.8)"><path d="M373.0,196.8C369.6,196.8 367.0,198.0 366.2,203.3L364.4,239.7Q364.8,243.5 366.1,242.7Q367.5,242.2 367.5,239.7L369.5,217.3L370.3,302.7Q370.6,305.1 372.3,304.7Q374.6,304.7 374.6,302.2L375.0,298.7L375.4,302.2Q375.4,304.7 377.7,304.7Q379.4,305.1 379.7,302.7L380.5,217.3L382.5,239.7Q382.5,242.2 383.9,242.7Q385.2,243.5 385.6,239.7L383.8,203.3C383.0,198.0 380.4,196.8 377.0,196.8Z" fill="url(#g3)"/><path d="M367.9,198.8Q375.0,196.2 382.1,198.8" fill="none" stroke="#fff" stroke-opacity=".28" stroke-width="1.2"/><path d="M375.0,230.2V303.7" stroke="#38980e" stroke-opacity=".9" stroke-width="1"/><path d="M374.3,231.2V303.7" stroke="#fff" stroke-opacity=".3" stroke-width=".6"/></g><ellipse cx="375.0" cy="181.8" rx="4.4" ry="12.2" fill="url(#g3)"/><g transform="translate(290.3 205.7) skewX(1.10) translate(-290.3 -205.7)"><path d="M288.3,205.7C283.3,205.7 280.7,206.9 279.9,212.2L278.1,253.6Q278.5,257.4 280.1,256.6Q281.8,256.1 281.8,253.6L283.9,228.5L284.7,323.5Q285.0,325.9 287.2,325.5Q289.9,325.5 289.9,323.0L290.3,319.5L290.7,323.0Q290.7,325.5 293.4,325.5Q295.6,325.9 295.9,323.5L296.7,228.5L298.8,253.6Q298.8,256.1 300.5,256.6Q302.1,257.4 302.5,253.6L300.7,212.2C299.9,206.9 297.3,205.7 292.3,205.7Z" fill="url(#g4)"/><path d="M281.6,207.7Q290.3,205.1 299.0,207.7" fill="none" stroke="#fff" stroke-opacity=".28" stroke-width="1.2"/><path d="M290.3,242.8V324.5" stroke="#4a44c4" stroke-opacity=".9" stroke-width="1"/><path d="M289.6,243.8V324.5" stroke="#fff" stroke-opacity=".3" stroke-width=".6"/></g><ellipse cx="290.3" cy="189.8" rx="4.9" ry="12.2" fill="url(#g4)"/><g transform="translate(324.7 205.6) skewX(0.24) translate(-324.7 -205.6)"><path d="M322.7,205.6C316.9,205.6 314.3,206.8 313.5,212.1L311.7,253.1Q312.1,256.9 313.9,256.1Q315.7,255.6 315.7,253.1L318.2,228.2L319.4,322.4Q319.7,324.8 321.8,324.4Q324.3,324.4 324.3,321.9L324.7,318.4L325.1,321.9Q325.1,324.4 327.6,324.4Q329.7,324.8 330.0,322.4L331.2,228.2L333.7,253.1Q333.7,255.6 335.5,256.1Q337.3,256.9 337.7,253.1L335.9,212.1C335.1,206.8 332.5,205.6 326.7,205.6Z" fill="url(#g5)"/><path d="M315.2,207.6Q324.7,205.0 334.2,207.6" fill="none" stroke="#fff" stroke-opacity=".28" stroke-width="1.2"/><path d="M324.7,242.4V323.4" stroke="#cc1c26" stroke-opacity=".9" stroke-width="1"/><path d="M324.0,243.4V323.4" stroke="#fff" stroke-opacity=".3" stroke-width=".6"/></g><ellipse cx="324.7" cy="190.2" rx="4.8" ry="13.5" fill="url(#g5)"/><g transform="translate(358.6 206.6) skewX(-0.58) translate(-358.6 -206.6)"><path d="M356.6,206.6C350.8,206.6 348.2,207.8 347.4,213.1L345.6,254.3Q346.0,258.1 347.8,257.3Q349.6,256.8 349.6,254.3L352.0,229.3L353.0,324.0Q353.3,326.4 355.5,326.0Q358.2,326.0 358.2,323.5L358.6,320.0L359.0,323.5Q359.0,326.0 361.7,326.0Q363.9,326.4 364.2,324.0L365.2,229.3L367.6,254.3Q367.6,256.8 369.4,257.3Q371.2,258.1 371.6,254.3L369.8,213.1C369.0,207.8 366.4,206.6 360.6,206.6Z" fill="url(#g6)"/><path d="M349.1,208.6Q358.6,206.0 368.1,208.6" fill="none" stroke="#fff" stroke-opacity=".28" stroke-width="1.2"/><path d="M358.6,243.6V325.0" stroke="#e4c010" stroke-opacity=".9" stroke-width="1"/><path d="M357.9,244.6V325.0" stroke="#fff" stroke-opacity=".3" stroke-width=".6"/></g><ellipse cx="358.6" cy="191.3" rx="5.1" ry="13.6" fill="url(#g6)"/><g transform="translate(393.8 204.6) skewX(-1.40) translate(-393.8 -204.6)"><path d="M391.8,204.6C385.3,204.6 382.7,205.8 381.9,211.1L380.1,252.0Q380.5,255.8 382.4,255.0Q384.3,254.5 384.3,252.0L387.0,227.1L388.2,321.2Q388.5,323.6 390.7,323.2Q393.4,323.2 393.4,320.7L393.8,317.2L394.2,320.7Q394.2,323.2 396.9,323.2Q399.1,323.6 399.4,321.2L400.6,227.1L403.3,252.0Q403.3,254.5 405.2,255.0Q407.1,255.8 407.5,252.0L405.7,211.1C404.9,205.8 402.3,204.6 395.8,204.6Z" fill="url(#g7)"/><path d="M383.6,206.6Q393.8,204.0 404.0,206.6" fill="none" stroke="#fff" stroke-opacity=".28" stroke-width="1.2"/><path d="M393.8,241.4V322.2" stroke="#0c844c" stroke-opacity=".9" stroke-width="1"/><path d="M393.1,242.4V322.2" stroke="#fff" stroke-opacity=".3" stroke-width=".6"/></g><ellipse cx="393.8" cy="189.8" rx="5.4" ry="12.8" fill="url(#g7)"/></svg></div><span class="t" style="left:136.68px;top:111.30px;font-size:17.4px;line-height:22.6px;color:#1f3d7d;font-weight:bold;transform:scaleX(0.9270);">PUBLIC LIMITED COMPANY</span><div style="left:88px;top:163.1px;width:163.2px;font-size:14px;line-height:18.3px;color:#101010"><span class="ln">Suited to mature</span><span class="ln last">businesses.</span></div><span style="left:74.900px;top:162.5px;font-size:14px;line-height:18.3px;color:#101010">•</span><div style="left:88px;top:203.8px;width:163.2px;font-size:14px;line-height:18.3px;color:#101010"><span class="ln">Permits its shareholders</span><span class="ln">to freely transfer their</span><span class="ln last">shares.</span></div><span style="left:74.900px;top:203.20000000000002px;font-size:14px;line-height:18.3px;color:#101010">•</span><div style="left:88px;top:262.1px;width:163.2px;font-size:14px;line-height:18.3px;color:#101010"><span class="ln">Highly regulated, and</span><span class="ln">there are several</span><span class="ln">restrictions which a public</span><span class="ln">limited company has to</span><span class="ln last">follow.</span></div><span style="left:74.900px;top:261.5px;font-size:14px;line-height:18.3px;color:#101010">•</span><div style="left:487.80px;top:80.20px;width:101.10px;height:56.40px;background:#232323"></div><div style="left:487.80px;top:140.80px;width:101.10px;height:56.40px;background:#232323"></div><div style="left:487.80px;top:201.40px;width:101.10px;height:56.40px;background:#232323"></div><div style="left:487.80px;top:262.10px;width:101.10px;height:56.40px;background:#232323"></div><div style="left:487.80px;top:322.50px;width:101.10px;height:56.40px;background:#232323"></div><span class="t" style="left:523.34px;top:103.30px;font-size:8.8px;line-height:11.4px;color:#fff;font-weight:bold;transform:scaleX(0.9913);">Neha G</span><span class="t" style="left:508.63px;top:163.50px;font-size:8.8px;line-height:11.4px;color:#fff;font-weight:bold;transform:scaleX(0.9472);">Priyanka singh</span><span class="t" style="left:520.09px;top:283.90px;font-size:8.8px;line-height:11.4px;color:#fff;font-weight:bold;transform:scaleX(0.9681);">SUSHMA</span><span class="t" style="left:509.25px;top:345.10px;font-size:8.8px;line-height:11.4px;color:#fff;font-weight:bold;transform:scaleX(0.9413);">Balashankar R</span><div style="left:515.70px;top:206.00px;width:46.00px;height:46.20px;background:#f07a00"></div><span class="t" style="left:529.56px;top:214.30px;font-size:24.6px;line-height:32.0px;color:#fff;transform:scaleX(1.0208);">B</span><div style="left:488.20px;top:247.40px;width:46.60px;height:10.40px;background:rgba(44,44,44,.88)"></div><span class="t" style="left:500.47px;top:248.55px;font-size:7.3px;line-height:9.5px;color:#fff;transform:scaleX(1.0292);">Betty Sibil</span><svg style="left:490.04px;top:247.8px" width="7.92" height="8.80" viewBox="0 0 9 10"><g fill="none" stroke="#e8404c" stroke-linecap="round"><rect x="3.200" y="1.200" width="2.600" height="4.600" rx="1.300" fill="#e8404c" stroke-width=".6"/><path d="M1.800 4.800a2.700 2.700 0 0 0 5.400 0M4.500 7.500v1.300M3.200 9h2.600" stroke-width=".9"/><path d="M7.900 0.700L1.300 9.300" stroke-width="1"/></g></svg><div style="left:488.00px;top:186.40px;width:11.40px;height:10.80px;background:#1f1f1f"></div><svg style="left:489.86px;top:186.7px" width="8.28" height="9.20" viewBox="0 0 9 10"><g fill="none" stroke="#e8404c" stroke-linecap="round"><rect x="3.200" y="1.200" width="2.600" height="4.600" rx="1.300" fill="#e8404c" stroke-width=".6"/><path d="M1.800 4.800a2.700 2.700 0 0 0 5.400 0M4.500 7.500v1.300M3.200 9h2.600" stroke-width=".9"/><path d="M7.900 0.700L1.300 9.300" stroke-width="1"/></g></svg><div style="left:598.20px;top:20.20px;width:221.80px;height:418.70px;background:#fff"></div><svg style="left:608.500px;top:31px" width="7" height="6" viewBox="0 0 7 6"><path d="M1.200 1.800l2.300 2.300 2.300-2.300" fill="none" stroke="#4a4a5a" stroke-width=".9"/></svg><span class="t" style="left:679.24px;top:28.50px;font-size:7.7px;line-height:10.0px;color:#232333;font-weight:bold;transform:scaleX(0.9775);">Participants (22)</span><div style="left:609.00px;top:51.20px;width:201.40px;height:18.40px;border:1px solid #cdd0de;border-radius:4.500px;background:#fff"></div><svg style="left:615.300px;top:56.300px" width="8" height="9" viewBox="0 0 8 9"><circle cx="3.300" cy="3.700" r="2.500" fill="none" stroke="#8a8c9a" stroke-width=".8"/><path d="M5.100 5.700l1.900 2.100" stroke="#8a8c9a" stroke-width=".9"/></svg><span class="t" style="left:625.20px;top:56.00px;font-size:7.5px;line-height:9.8px;color:#6a6c7a;transform:scaleX(1.0245);">Find a participant</span><div style="left:598.2px;top:70px;width:216px;height:338.2px;overflow:hidden"><div style="left:-598.2px;top:-70px;width:830px;height:519px"><div class="av" style="left:608.80px;top:75.35px;width:14.60px;height:14.60px;background:#8e3bb5"></div><span class="t" style="left:614.09px;top:78.15px;font-size:8.4px;line-height:10.9px;color:#fff;font-weight:bold;transform:scaleX(0.8041);">C</span><span class="t" style="left:630.83px;top:78.60px;font-size:7.5px;line-height:9.8px;color:#3a3a48;transform:scaleX(0.9686);">C.Joy (Me)</span><svg style="left:797.4px;top:77.59px" width="8.60" height="10.32" viewBox="0 0 10 12"><g fill="none" stroke="#e84f5c" stroke-width="0.9" stroke-linecap="round"><rect x="3.500" y="1.400" width="3" height="5.600" rx="1.500"/><path d="M1.900 5.700a3.100 3.100 0 0 0 6.200 0M5 8.900v1.700M3.300 10.700h3.400M8.700 0.800L1.600 11"/></g></svg><div class="av" style="left:608.80px;top:98.98px;width:14.60px;height:14.60px;background:#c8401c"></div><span class="t" style="left:612.19px;top:99.55px;font-size:11.8px;line-height:15.3px;color:#fff;transform:scaleX(0.9627);">S</span><span class="t" style="left:630.44px;top:102.12px;font-size:7.5px;line-height:9.8px;color:#3a3a48;transform:scaleX(0.9729);">Susanna Cherian (Host)</span><svg style="left:754.9px;top:99.98px" width="10.00" height="12.00" viewBox="0 0 10 12"><rect x="0" y="2.800" width="9.600" height="7.100" rx="1" fill="#1aa832"/><path d="M4.800 4.700l1.800 2h-1.100v1.400h-1.400v-1.400h-1.100z" fill="#fff"/></svg><svg style="left:769.19px;top:101.46px" width="9.02" height="9.84" viewBox="0 0 11 12"><path d="M2.900 9.300a2.200 2.200 0 0 1-.3-4.400 3.100 3.100 0 0 1 6 .3 2.100 2.100 0 0 1-.3 4.100z" fill="#fff" stroke="#9a9aa4" stroke-width="0.8"/><circle cx="5.500" cy="6.800" r="1.300" fill="#e8303a"/></svg><svg style="left:783.3px;top:101.34px" width="8.40" height="10.08" viewBox="0 0 10 12"><g fill="none" stroke="#8c8c96" stroke-width="0.9" stroke-linecap="round"><rect x="3.500" y="1.400" width="3" height="5.600" rx="1.500" fill="#ececf0"/><path d="M1.900 5.700a3.100 3.100 0 0 0 6.200 0M5 8.900v1.700M3.300 10.700h3.400"/></g></svg><svg style="left:796.36px;top:101.34px" width="10.08" height="10.08" viewBox="0 0 12 12"><g fill="none" stroke="#8c8c96" stroke-width="0.9" stroke-linecap="round" stroke-linejoin="round"><rect x="0.800" y="3.200" width="7.600" height="5.800" rx="1.300"/><path d="M8.600 5.300l2.400-1.500v4.600l-2.400-1.500"/></g></svg><div class="av" style="left:608.80px;top:122.61px;width:14.60px;height:14.60px;background:#7a1fb0"></div><span class="t" style="left:613.08px;top:123.30px;font-size:12.3px;line-height:16.0px;color:#fff;transform:scaleX(0.8352);">C</span><span class="t" style="left:630.82px;top:125.64px;font-size:7.5px;line-height:9.8px;color:#3a3a48;transform:scaleX(0.9541);">CELINA JOY (Co-host)</span><svg style="left:769.19px;top:125.09px" width="9.02" height="9.84" viewBox="0 0 11 12"><path d="M2.900 9.300a2.200 2.200 0 0 1-.3-4.400 3.100 3.100 0 0 1 6 .3 2.100 2.100 0 0 1-.3 4.100z" fill="#fff" stroke="#9a9aa4" stroke-width="0.8"/><circle cx="5.500" cy="6.800" r="1.300" fill="#e8303a"/></svg><svg style="left:783.2px;top:124.85px" width="8.60" height="10.32" viewBox="0 0 10 12"><g fill="none" stroke="#e84f5c" stroke-width="0.9" stroke-linecap="round"><rect x="3.500" y="1.400" width="3" height="5.600" rx="1.500"/><path d="M1.900 5.700a3.100 3.100 0 0 0 6.200 0M5 8.900v1.700M3.300 10.700h3.400M8.700 0.800L1.600 11"/></g></svg><svg style="left:796.44px;top:124.85px" width="10.32" height="10.32" viewBox="0 0 12 12"><g fill="none" stroke="#e84f5c" stroke-width="0.9" stroke-linecap="round" stroke-linejoin="round"><rect x="0.800" y="3.200" width="7.600" height="5.800" rx="1.300"/><path d="M8.600 5.300l2.400-1.500v4.600l-2.400-1.500M10.300 1.200L1.800 10.800"/></g></svg><div class="av" style="left:608.80px;top:146.24px;width:14.60px;height:14.60px;background:#fdfdfd;border-radius:2px"><i style="left:.2px;top:4.400px;width:7.700px;height:4.100px;background:#2f68ae;border-radius:1.200px"></i><i style="left:1.600px;top:5.600px;width:1.200px;height:1.800px;background:#9fc0e6"></i><i style="left:4.400px;top:5.600px;width:1.200px;height:1.800px;background:#9fc0e6"></i><i style="left:9.300px;top:5.800px;width:4.700px;height:1.600px;background:#b4c4dc"></i><i style="left:10.700px;top:9.700px;width:3.900px;height:1px;background:#3a4f8a"></i><i style="left:.3px;top:9.800px;width:10px;height:.6px;background:#cfd6e4"></i><i style="left:.5px;top:1.400px;width:4.500px;height:.9px;background:#f0c4a0;transform:rotate(-32deg)"></i></div><span class="t" style="left:630.57px;top:149.16px;font-size:7.5px;line-height:9.8px;color:#3a3a48;transform:scaleX(1.0162);">Tanvi Vadke (Co-host)</span><svg style="left:769.19px;top:148.72px" width="9.02" height="9.84" viewBox="0 0 11 12"><path d="M2.900 9.300a2.200 2.200 0 0 1-.3-4.400 3.100 3.100 0 0 1 6 .3 2.100 2.100 0 0 1-.3 4.100z" fill="#fff" stroke="#9a9aa4" stroke-width="0.8"/><circle cx="5.500" cy="6.800" r="1.300" fill="#e8303a"/></svg><svg style="left:783.2px;top:148.48px" width="8.60" height="10.32" viewBox="0 0 10 12"><g fill="none" stroke="#e84f5c" stroke-width="0.9" stroke-linecap="round"><rect x="3.500" y="1.400" width="3" height="5.600" rx="1.500"/><path d="M1.900 5.700a3.100 3.100 0 0 0 6.200 0M5 8.900v1.700M3.300 10.700h3.400M8.700 0.800L1.600 11"/></g></svg><svg style="left:796.44px;top:148.48px" width="10.32" height="10.32" viewBox="0 0 12 12"><g fill="none" stroke="#e84f5c" stroke-width="0.9" stroke-linecap="round" stroke-linejoin="round"><rect x="0.800" y="3.200" width="7.600" height="5.800" rx="1.300"/><path d="M8.600 5.300l2.400-1.500v4.600l-2.400-1.500M10.300 1.200L1.800 10.800"/></g></svg><div class="av" style="left:608.80px;top:169.87px;width:14.60px;height:14.60px;background:#2a7fc8"></div><span class="t" style="left:610.37px;top:171.83px;font-size:9.3px;line-height:12.1px;color:#fff;font-weight:bold;transform:scaleX(0.7897);">BR</span><span class="t" style="left:630.54px;top:173.68px;font-size:7.5px;line-height:9.8px;color:#3a3a48;transform:scaleX(0.9616);">Balashankar R</span><svg style="left:797.3px;top:172.23px" width="8.40" height="10.08" viewBox="0 0 10 12"><g fill="none" stroke="#8c8c96" stroke-width="0.9" stroke-linecap="round"><rect x="3.500" y="1.400" width="3" height="5.600" rx="1.500" fill="#ececf0"/><path d="M1.900 5.700a3.100 3.100 0 0 0 6.200 0M5 8.900v1.700M3.300 10.700h3.400"/></g></svg><div class="av" style="left:608.50px;top:193.00px;width:15.30px;height:15.40px;background:#eceef2;border:.5px solid #d4d8e0"><i style="left:5.200px;top:1.300px;width:6.200px;height:5.400px;border-radius:3px 3px 2px 2px;background:#1c1410"></i><i style="left:6px;top:3.600px;width:4.400px;height:5px;border-radius:1.500px 1.500px 2.200px 2.200px;background:#bf7a4c"></i><i style="left:2.400px;top:9px;width:10.600px;height:4.600px;border-radius:4px 4px 1px 1px;background:#e8222c"></i></div><span class="t" style="left:630.26px;top:197.20px;font-size:7.5px;line-height:9.8px;color:#3a3a48;transform:scaleX(1.0545);">1232</span><svg style="left:783.2px;top:195.74px" width="8.60" height="10.32" viewBox="0 0 10 12"><g fill="none" stroke="#e84f5c" stroke-width="0.9" stroke-linecap="round"><rect x="3.500" y="1.400" width="3" height="5.600" rx="1.500"/><path d="M1.900 5.700a3.100 3.100 0 0 0 6.200 0M5 8.900v1.700M3.300 10.700h3.400M8.700 0.800L1.600 11"/></g></svg><svg style="left:796.44px;top:195.74px" width="10.32" height="10.32" viewBox="0 0 12 12"><g fill="none" stroke="#e84f5c" stroke-width="0.9" stroke-linecap="round" stroke-linejoin="round"><rect x="0.800" y="3.200" width="7.600" height="5.800" rx="1.300"/><path d="M8.600 5.300l2.400-1.500v4.600l-2.400-1.500M10.300 1.200L1.800 10.800"/></g></svg><div class="av" style="left:608.80px;top:217.13px;width:14.60px;height:14.60px;background:#c32e2b"></div><span class="t" style="left:610.62px;top:218.87px;font-size:9.3px;line-height:12.1px;color:#fff;font-weight:bold;transform:scaleX(0.8460);">AG</span><span class="t" style="left:631.06px;top:220.72px;font-size:7.5px;line-height:9.8px;color:#3a3a48;transform:scaleX(0.9451);">AASHISH GONDHALI</span><svg style="left:783.2px;top:219.37px" width="8.60" height="10.32" viewBox="0 0 10 12"><g fill="none" stroke="#e84f5c" stroke-width="0.9" stroke-linecap="round"><rect x="3.500" y="1.400" width="3" height="5.600" rx="1.500"/><path d="M1.900 5.700a3.100 3.100 0 0 0 6.200 0M5 8.900v1.700M3.300 10.700h3.400M8.700 0.800L1.600 11"/></g></svg><svg style="left:796.44px;top:219.37px" width="10.32" height="10.32" viewBox="0 0 12 12"><g fill="none" stroke="#e84f5c" stroke-width="0.9" stroke-linecap="round" stroke-linejoin="round"><rect x="0.800" y="3.200" width="7.600" height="5.800" rx="1.300"/><path d="M8.600 5.300l2.400-1.500v4.600l-2.400-1.500M10.300 1.200L1.800 10.800"/></g></svg><div class="av" style="left:608.80px;top:240.76px;width:14.60px;height:14.60px;background:#c32e2b"></div><span class="t" style="left:610.09px;top:242.39px;font-size:9.3px;line-height:12.1px;color:#fff;font-weight:bold;transform:scaleX(0.8685);">AA</span><span class="t" style="left:631.11px;top:244.24px;font-size:7.5px;line-height:9.8px;color:#3a3a48;transform:scaleX(0.9878);">Abhishek Ajithkumar</span><svg style="left:783.2px;top:243.0px" width="8.60" height="10.32" viewBox="0 0 10 12"><g fill="none" stroke="#e84f5c" stroke-width="0.9" stroke-linecap="round"><rect x="3.500" y="1.400" width="3" height="5.600" rx="1.500"/><path d="M1.900 5.700a3.100 3.100 0 0 0 6.200 0M5 8.900v1.700M3.300 10.700h3.400M8.700 0.800L1.600 11"/></g></svg><svg style="left:796.44px;top:243.0px" width="10.32" height="10.32" viewBox="0 0 12 12"><g fill="none" stroke="#e84f5c" stroke-width="0.9" stroke-linecap="round" stroke-linejoin="round"><rect x="0.800" y="3.200" width="7.600" height="5.800" rx="1.300"/><path d="M8.600 5.300l2.400-1.500v4.600l-2.400-1.500M10.300 1.200L1.800 10.800"/></g></svg><div class="av" style="left:608.80px;top:264.39px;width:14.60px;height:14.60px;background:linear-gradient(90deg,#5f6366,#7c8083 60%,#6a6e72)"><i style="left:4.800px;top:.7px;width:6.400px;height:5px;border-radius:3px 3px 1px 1px;background:#15110f"></i><i style="left:5.500px;top:2.400px;width:5px;height:6.800px;border-radius:1.500px 1.500px 2.500px 2.500px;background:#b48c70"></i><i style="left:.8px;top:9.600px;width:13px;height:6px;border-radius:4px 4px 0 0;background:#181a28"></i><i style="left:6.700px;top:9.200px;width:2.600px;height:4.500px;background:#e4e6ee;clip-path:polygon(0 0,100% 0,50% 100%)"></i><i style="left:7.600px;top:10px;width:.9px;height:4px;background:#2a2c40"></i></div><span class="t" style="left:631.04px;top:267.76px;font-size:7.5px;line-height:9.8px;color:#3a3a48;transform:scaleX(0.9389);">Abhishek_Rajpurohit_PHCET</span><svg style="left:783.2px;top:266.63px" width="8.60" height="10.32" viewBox="0 0 10 12"><g fill="none" stroke="#e84f5c" stroke-width="0.9" stroke-linecap="round"><rect x="3.500" y="1.400" width="3" height="5.600" rx="1.500"/><path d="M1.900 5.700a3.100 3.100 0 0 0 6.200 0M5 8.900v1.700M3.300 10.700h3.400M8.700 0.800L1.600 11"/></g></svg><svg style="left:796.44px;top:266.63px" width="10.32" height="10.32" viewBox="0 0 12 12"><g fill="none" stroke="#e84f5c" stroke-width="0.9" stroke-linecap="round" stroke-linejoin="round"><rect x="0.800" y="3.200" width="7.600" height="5.800" rx="1.300"/><path d="M8.600 5.300l2.400-1.500v4.600l-2.400-1.500M10.300 1.200L1.800 10.800"/></g></svg><div class="av" style="left:608.80px;top:288.02px;width:14.60px;height:14.60px;background:#e3e3eb"><i style="left:3.600px;top:1px;width:7.800px;height:9.500px;border-radius:3.900px 3.900px 2px 2px;background:#2a161c"></i><i style="left:4.700px;top:3px;width:5.600px;height:8.200px;border-radius:2.400px 2.400px 2.800px 2.800px;background:#dba6a2"></i><i style="left:2.400px;top:12px;width:9.800px;height:3px;border-radius:3px 3px 0 0;background:#2a2028"></i><i style="left:6.200px;top:11px;width:2.600px;height:2.500px;background:#dba6a2"></i></div><span class="t" style="left:631.06px;top:291.28px;font-size:7.5px;line-height:9.8px;color:#3a3a48;transform:scaleX(0.9332);">ASHWINI PATIL</span><svg style="left:783.2px;top:290.26px" width="8.60" height="10.32" viewBox="0 0 10 12"><g fill="none" stroke="#e84f5c" stroke-width="0.9" stroke-linecap="round"><rect x="3.500" y="1.400" width="3" height="5.600" rx="1.500"/><path d="M1.900 5.700a3.100 3.100 0 0 0 6.200 0M5 8.900v1.700M3.300 10.700h3.400M8.700 0.800L1.600 11"/></g></svg><svg style="left:796.44px;top:290.26px" width="10.32" height="10.32" viewBox="0 0 12 12"><g fill="none" stroke="#e84f5c" stroke-width="0.9" stroke-linecap="round" stroke-linejoin="round"><rect x="0.800" y="3.200" width="7.600" height="5.800" rx="1.300"/><path d="M8.600 5.300l2.400-1.500v4.600l-2.400-1.500M10.300 1.200L1.800 10.800"/></g></svg><div class="av" style="left:608.80px;top:311.65px;width:14.60px;height:14.60px;background:#f07a10"></div><span class="t" style="left:612.36px;top:312.30px;font-size:11.2px;line-height:14.6px;color:#fff;transform:scaleX(0.9510);">B</span><span class="t" style="left:630.54px;top:314.80px;font-size:7.5px;line-height:9.8px;color:#3a3a48;transform:scaleX(0.9816);">Betty Sibil</span><svg style="left:783.2px;top:313.89px" width="8.60" height="10.32" viewBox="0 0 10 12"><g fill="none" stroke="#e84f5c" stroke-width="0.9" stroke-linecap="round"><rect x="3.500" y="1.400" width="3" height="5.600" rx="1.500"/><path d="M1.900 5.700a3.100 3.100 0 0 0 6.200 0M5 8.900v1.700M3.300 10.700h3.400M8.700 0.800L1.600 11"/></g></svg><svg style="left:796.44px;top:313.89px" width="10.32" height="10.32" viewBox="0 0 12 12"><g fill="none" stroke="#e84f5c" stroke-width="0.9" stroke-linecap="round" stroke-linejoin="round"><rect x="0.800" y="3.200" width="7.600" height="5.800" rx="1.300"/><path d="M8.600 5.300l2.400-1.500v4.600l-2.400-1.500M10.300 1.200L1.800 10.800"/></g></svg><div class="av" style="left:608.80px;top:335.28px;width:14.60px;height:14.60px;background:#c32e2b"></div><span class="t" style="left:610.40px;top:336.47px;font-size:9.3px;line-height:12.1px;color:#fff;font-weight:bold;transform:scaleX(0.8842);">NG</span><span class="t" style="left:630.54px;top:338.32px;font-size:7.5px;line-height:9.8px;color:#3a3a48;transform:scaleX(0.9967);">Nehal Gharat</span><svg style="left:783.2px;top:337.52px" width="8.60" height="10.32" viewBox="0 0 10 12"><g fill="none" stroke="#e84f5c" stroke-width="0.9" stroke-linecap="round"><rect x="3.500" y="1.400" width="3" height="5.600" rx="1.500"/><path d="M1.900 5.700a3.100 3.100 0 0 0 6.200 0M5 8.900v1.700M3.300 10.700h3.400M8.700 0.800L1.600 11"/></g></svg><svg style="left:796.44px;top:337.52px" width="10.32" height="10.32" viewBox="0 0 12 12"><g fill="none" stroke="#e84f5c" stroke-width="0.9" stroke-linecap="round" stroke-linejoin="round"><rect x="0.800" y="3.200" width="7.600" height="5.800" rx="1.300"/><path d="M8.600 5.300l2.400-1.500v4.600l-2.400-1.500M10.300 1.200L1.800 10.800"/></g></svg><div class="av" style="left:608.80px;top:358.91px;width:14.60px;height:14.60px;background:#dc5a0c"></div><span class="t" style="left:609.57px;top:360.99px;font-size:9.3px;line-height:12.1px;color:#fff;font-weight:bold;transform:scaleX(0.9186);">PM</span><span class="t" style="left:630.46px;top:361.84px;font-size:7.5px;line-height:9.8px;color:#3a3a48;transform:scaleX(1.0224);">Pritam Mundhe</span><svg style="left:783.2px;top:361.15px" width="8.60" height="10.32" viewBox="0 0 10 12"><g fill="none" stroke="#e84f5c" stroke-width="0.9" stroke-linecap="round"><rect x="3.500" y="1.400" width="3" height="5.600" rx="1.500"/><path d="M1.900 5.700a3.100 3.100 0 0 0 6.200 0M5 8.900v1.700M3.300 10.700h3.400M8.700 0.800L1.600 11"/></g></svg><svg style="left:796.44px;top:361.15px" width="10.32" height="10.32" viewBox="0 0 12 12"><g fill="none" stroke="#e84f5c" stroke-width="0.9" stroke-linecap="round" stroke-linejoin="round"><rect x="0.800" y="3.200" width="7.600" height="5.800" rx="1.300"/><path d="M8.600 5.300l2.400-1.500v4.600l-2.400-1.500M10.300 1.200L1.800 10.800"/></g></svg><div class="av" style="left:608.80px;top:382.54px;width:14.60px;height:14.60px;background:#22a85a"></div><span class="t" style="left:611.27px;top:384.51px;font-size:9.3px;line-height:12.1px;color:#fff;font-weight:bold;transform:scaleX(0.8410);">PS</span><span class="t" style="left:630.54px;top:386.36px;font-size:7.5px;line-height:9.8px;color:#3a3a48;transform:scaleX(0.9794);">Priyanka singh</span><svg style="left:783.2px;top:384.78px" width="8.60" height="10.32" viewBox="0 0 10 12"><g fill="none" stroke="#e84f5c" stroke-width="0.9" stroke-linecap="round"><rect x="3.500" y="1.400" width="3" height="5.600" rx="1.500"/><path d="M1.900 5.700a3.100 3.100 0 0 0 6.200 0M5 8.900v1.700M3.300 10.700h3.400M8.700 0.800L1.600 11"/></g></svg><svg style="left:796.44px;top:384.78px" width="10.32" height="10.32" viewBox="0 0 12 12"><g fill="none" stroke="#e84f5c" stroke-width="0.9" stroke-linecap="round" stroke-linejoin="round"><rect x="0.800" y="3.200" width="7.600" height="5.800" rx="1.300"/><path d="M8.600 5.300l2.400-1.500v4.600l-2.400-1.500M10.300 1.200L1.800 10.800"/></g></svg><div class="av" style="left:608.80px;top:406.17px;width:14.60px;height:14.60px;background:#18a08a"></div></div></div><div style="left:814.30px;top:71.80px;width:4.10px;height:236.20px;background:#b4b4b8;border-radius:2px"></div><div style="left:649.20px;top:418.30px;width:24.10px;height:11.90px;background:#f1f2f6;border-radius:3px"></div><span class="t" style="left:652.66px;top:420.00px;font-size:7.5px;line-height:9.8px;color:#232333;transform:scaleX(0.9890);">Invite</span><div style="left:724.90px;top:418.30px;width:43.70px;height:11.90px;background:#f1f2f6;border-radius:3px"></div><span class="t" style="left:728.11px;top:420.00px;font-size:7.5px;line-height:9.8px;color:#232333;transform:scaleX(0.9661);">Unmute Me</span></div>
</body>
</html>
